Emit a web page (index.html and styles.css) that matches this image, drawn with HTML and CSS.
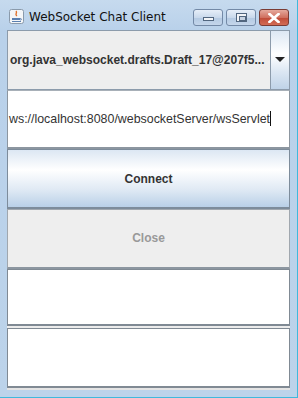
FILE: index.html
```html
<!DOCTYPE html>
<html lang="en">
<head>
    <meta charset="UTF-8">
    <title>WebSocket Chat Client</title>
    <link rel="stylesheet" href="styles.css">
</head>
<body>
    <div class="window">
        <div class="title-bar">
            <div class="title-left">
                <span class="app-icon">
                    <svg width="15" height="15" viewBox="0 0 15 15">
                        <rect x="0.5" y="0.5" width="14" height="14" rx="2" fill="#f4f6f8" stroke="#8a9aab"/>
                        <path d="M7 2 C9 4 5 5 8 7" stroke="#e0702a" stroke-width="1.4" fill="none"/>
                        <path d="M3 9 H11 V11 H3 Z" fill="#5a7fb0"/>
                        <path d="M11 9.5 C13 9.5 13 11 11 11" stroke="#5a7fb0" fill="none"/>
                        <path d="M3 12.5 H12" stroke="#5a7fb0"/>
                    </svg>
                </span>
                <span class="title-text">WebSocket Chat Client</span>
            </div>
            <div class="title-buttons">
                <div class="tb-btn"><span class="glyph-min"></span></div>
                <div class="tb-btn"><span class="glyph-max"></span></div>
                <div class="tb-btn tb-close">
                    <svg width="12" height="10" viewBox="0 0 12 10">
                        <path d="M1.5 1 L10.5 9 M10.5 1 L1.5 9" stroke="#fff" stroke-width="2.6" stroke-linecap="square"/>
                    </svg>
                </div>
            </div>
        </div>

        <div class="content">
            <div class="combo">
                <div class="combo-value">org.java_websocket.drafts.Draft_17@207f5...</div>
                <div class="combo-arrow"><span class="arrow"></span></div>
            </div>
            <div class="text-field">
                <span>ws://localhost:8080/websocketServer/wsServlet</span><span class="caret"></span>
            </div>
            <button class="btn btn-connect">Connect</button>
            <button class="btn btn-close" disabled>Close</button>
            <div class="text-area"></div>
            <div class="text-area last"></div>
        </div>
    </div>
</body>
</html>
```

FILE: styles.css
```css
* {
    margin: 0;
    padding: 0;
    box-sizing: border-box;
}

body {
    width: 298px;
    height: 398px;
    overflow: hidden;
    background: #bad2eb;
}

.window {
    width: 298px;
    height: 398px;
    display: flex;
    flex-direction: column;
    background: linear-gradient(180deg, #c6daee, #b9d1ea 30px, #bcd3ea);
    border-right: 1px solid #3fb9dc;
    border-bottom: 1px solid #3fb9dc;
}

.title-bar {
    height: 30px;
    display: flex;
    justify-content: space-between;
    align-items: flex-start;
    padding: 0 8px 0 9px;
}

.title-left {
    display: flex;
    align-items: center;
    gap: 5px;
    margin-top: 9px;
}

.app-icon {
    display: flex;
}

.title-text {
    font-family: "DejaVu Sans", "Noto Sans", sans-serif;
    font-size: 12px;
    color: #111;
}

.title-buttons {
    display: flex;
    gap: 3px;
    margin-top: 9px;
}

.tb-btn {
    width: 30px;
    height: 17px;
    border: 1px solid #7389a6;
    border-radius: 3px;
    background: linear-gradient(180deg, #e6eef8, #c9d9ec 50%, #b3c9e2 51%, #c4d6eb);
    display: flex;
    align-items: center;
    justify-content: center;
}

.glyph-min {
    width: 11px;
    height: 4px;
    margin-top: 3px;
    background: #f2f4f7;
    border: 1px solid #51667f;
}

.glyph-max {
    width: 11px;
    height: 9px;
    background: #f2f4f7;
    border: 1px solid #51667f;
    position: relative;
}

.glyph-max::after {
    content: "";
    position: absolute;
    left: 2px;
    top: 2px;
    width: 5px;
    height: 3px;
    border: 1px solid #51667f;
    background: #c7d3e2;
}

.tb-close {
    border-color: #7a3b34;
    background: linear-gradient(180deg, #e5a99d, #d0705f 50%, #bf4a37 51%, #d26b54);
}

.content {
    flex: 1;
    margin: 0 7px 7px 7px;
    display: grid;
    grid-template-rows: repeat(6, 1fr);
    background: #ececec;
    border-bottom: 2px solid #e4e4e4;
}

.combo {
    display: flex;
    border: 1px solid #8c9bab;
    background: #eeeeee;
}

.combo-value {
    flex: 1;
    display: flex;
    align-items: center;
    padding-left: 2px;
    font-family: "Liberation Sans", Arial, sans-serif;
    font-weight: bold;
    font-size: 12px;
    color: #333;
    white-space: nowrap;
    overflow: hidden;
}

.combo-arrow {
    width: 19px;
    border-left: 1px solid #8c9bab;
    background: linear-gradient(180deg, #dde8f4, #ffffff 40%, #dce7f3 70%, #bfd3e8);
    display: flex;
    align-items: center;
    justify-content: center;
}

.arrow {
    width: 0;
    height: 0;
    border-left: 5px solid transparent;
    border-right: 5px solid transparent;
    border-top: 5px solid #222;
}

.text-field {
    display: flex;
    align-items: center;
    padding-left: 1px;
    background: #fff;
    border: 1px solid #8c96a0;
    border-top-color: #a8b0b8;
    border-bottom: 2px solid #8c96a0;
    font-family: "Liberation Sans", Arial, sans-serif;
    font-size: 12.4px;
    color: #333;
    white-space: nowrap;
    overflow: hidden;
}

.caret {
    width: 1px;
    height: 15px;
    background: #111;
}

.btn {
    font-family: "Liberation Sans", Arial, sans-serif;
    font-weight: bold;
    font-size: 12px;
    border: 1px solid #7d8c9b;
    border-bottom: 2px solid #7d8c9b;
}

.btn-connect {
    color: #333;
    background: linear-gradient(180deg, #dce7f3, #ffffff 35%, #dfe9f4 70%, #b9d0e7);
}

.btn-close {
    color: #999;
    background: #eeeeee;
    border-color: #a0a7ae;
    border-bottom: 2px solid #8c96a0;
}

.text-area {
    background: #fff;
    border: 1px solid #808a94;
    border-bottom: 2px solid #808a94;
    margin-bottom: 2px;
}

.text-area.last {
    margin-bottom: 0;
}
```
